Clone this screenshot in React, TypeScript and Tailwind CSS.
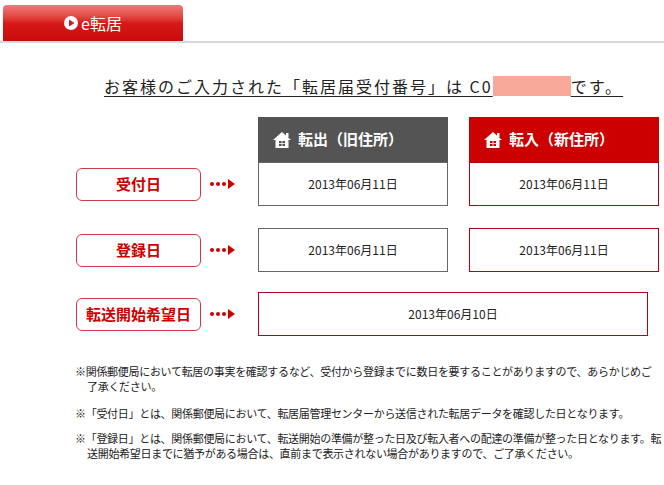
import React from "react";

const House = () => (
  <svg width="20" height="20" viewBox="0 0 20 20" className="shrink-0">
    <path d="M10 2 L1 10 H3.5 V18 H16.5 V10 H19 Z" fill="#fff" />
    <rect x="14" y="3" width="2.5" height="4" fill="#fff" />
    <rect x="7" y="11" width="6" height="5" fill="currentColor" />
    <rect x="9.6" y="11" width="0.8" height="5" fill="#fff" />
    <rect x="7" y="13.2" width="6" height="0.8" fill="#fff" />
  </svg>
);

const Arrow = () => (
  <div className="flex items-center gap-[2px] text-[#cc0000] w-[30px]">
    <span className="w-[4px] h-[4px] rounded-full bg-[#cc0000]" />
    <span className="w-[4px] h-[4px] rounded-full bg-[#cc0000]" />
    <span className="w-[4px] h-[4px] rounded-full bg-[#cc0000]" />
    <svg width="7" height="10" viewBox="0 0 7 10"><path d="M0 0 L7 5 L0 10 Z" fill="#cc0000" /></svg>
  </div>
);

const Label = ({ t }: { t: string }) => (
  <div className="w-[125px] h-[33px] border border-[#d23a4a] rounded-[6px] flex items-center justify-center text-[#cc0000] font-bold text-[15px]">
    {t}
  </div>
);

const DateBox = ({ t, red, w = "w-[190px]" }: { t: string; red?: boolean; w?: string }) => (
  <div className={`${w} h-[44px] border ${red ? "border-[#b0001a]" : "border-[#666]"} flex items-center justify-center text-[12px] text-[#222]`}>
    {t}
  </div>
);

export default function App() {
  const font = { fontFamily: '"Noto Sans CJK JP", "Liberation Sans", sans-serif' };
  return (
    <div className="w-[664px] h-[485px] bg-white overflow-hidden" style={font}>
      <div className="pt-[5px] border-b-2 border-[#d8d8d8]">
        <div className="ml-[3px] w-[180px] h-[36px] rounded-t-[4px] bg-gradient-to-b from-[#ec7b7b] via-[#d81818] to-[#c80a0a] flex items-center justify-center gap-[3px] text-white text-[16px]">
          <svg width="14" height="14" viewBox="0 0 14 14"><circle cx="7" cy="7" r="7" fill="#fff" /><path d="M5 3.5 L10.5 7 L5 10.5 Z" fill="#d81818" /></svg>
          <span>e転居</span>
        </div>
      </div>
      <div className="ml-[104px] mt-[33px] text-[16px] tracking-[2px] text-[#222] underline underline-offset-[3px] leading-[20px] flex items-center">
        お客様のご入力された「転居届受付番号」は C0<span className="inline-block w-[78px] h-[20px] bg-[#f9a99a]" />です。
      </div>
      <div className="ml-[258px] mt-[21px] flex gap-[21px]">
        <div className="w-[190px] h-[45px] bg-[#545454] text-[#545454] flex items-center gap-[6px] pl-[14px]">
          <House /><span className="text-white text-[15px] font-bold">転出（旧住所）</span>
        </div>
        <div className="w-[190px] h-[45px] bg-[#cc0000] text-[#cc0000] flex items-center gap-[6px] pl-[14px]">
          <House /><span className="text-white text-[15px] font-bold">転入（新住所）</span>
        </div>
      </div>
      <div className="ml-[76px] flex items-center">
        <Label t="受付日" />
        <div className="ml-[9px] mr-[18px]"><Arrow /></div>
        <div className="flex gap-[21px]"><DateBox t="2013年06月11日" /><DateBox t="2013年06月11日" red /></div>
      </div>
      <div className="ml-[76px] mt-[22px] flex items-center">
        <Label t="登録日" />
        <div className="ml-[9px] mr-[18px]"><Arrow /></div>
        <div className="flex gap-[21px]"><DateBox t="2013年06月11日" /><DateBox t="2013年06月11日" red /></div>
      </div>
      <div className="ml-[76px] mt-[20px] flex items-center">
        <Label t="転送開始希望日" />
        <div className="ml-[9px] mr-[18px]"><Arrow /></div>
        <DateBox t="2013年06月10日" red w="w-[390px]" />
      </div>
      <div className="ml-[75px] mr-[2px] mt-[28px] text-[11px] tracking-[-0.3px] leading-[15px] text-[#222]">
        <p className="pl-[12px] -indent-[12px]">※関係郵便局において転居の事実を確認するなど、受付から登録までに数日を要することがありますので、あらかじめご了承ください。</p>
        <p className="mt-[12px] pl-[12px] -indent-[12px]">※「受付日」とは、関係郵便局において、転居届管理センターから送信された転居データを確認した日となります。</p>
        <p className="mt-[10px] pl-[12px] -indent-[12px]">※「登録日」とは、関係郵便局において、転送開始の準備が整った日及び転入者への配達の準備が整った日となります。転送開始希望日までに猶予がある場合は、直前まで表示されない場合がありますので、ご了承ください。</p>
      </div>
    </div>
  );
}
